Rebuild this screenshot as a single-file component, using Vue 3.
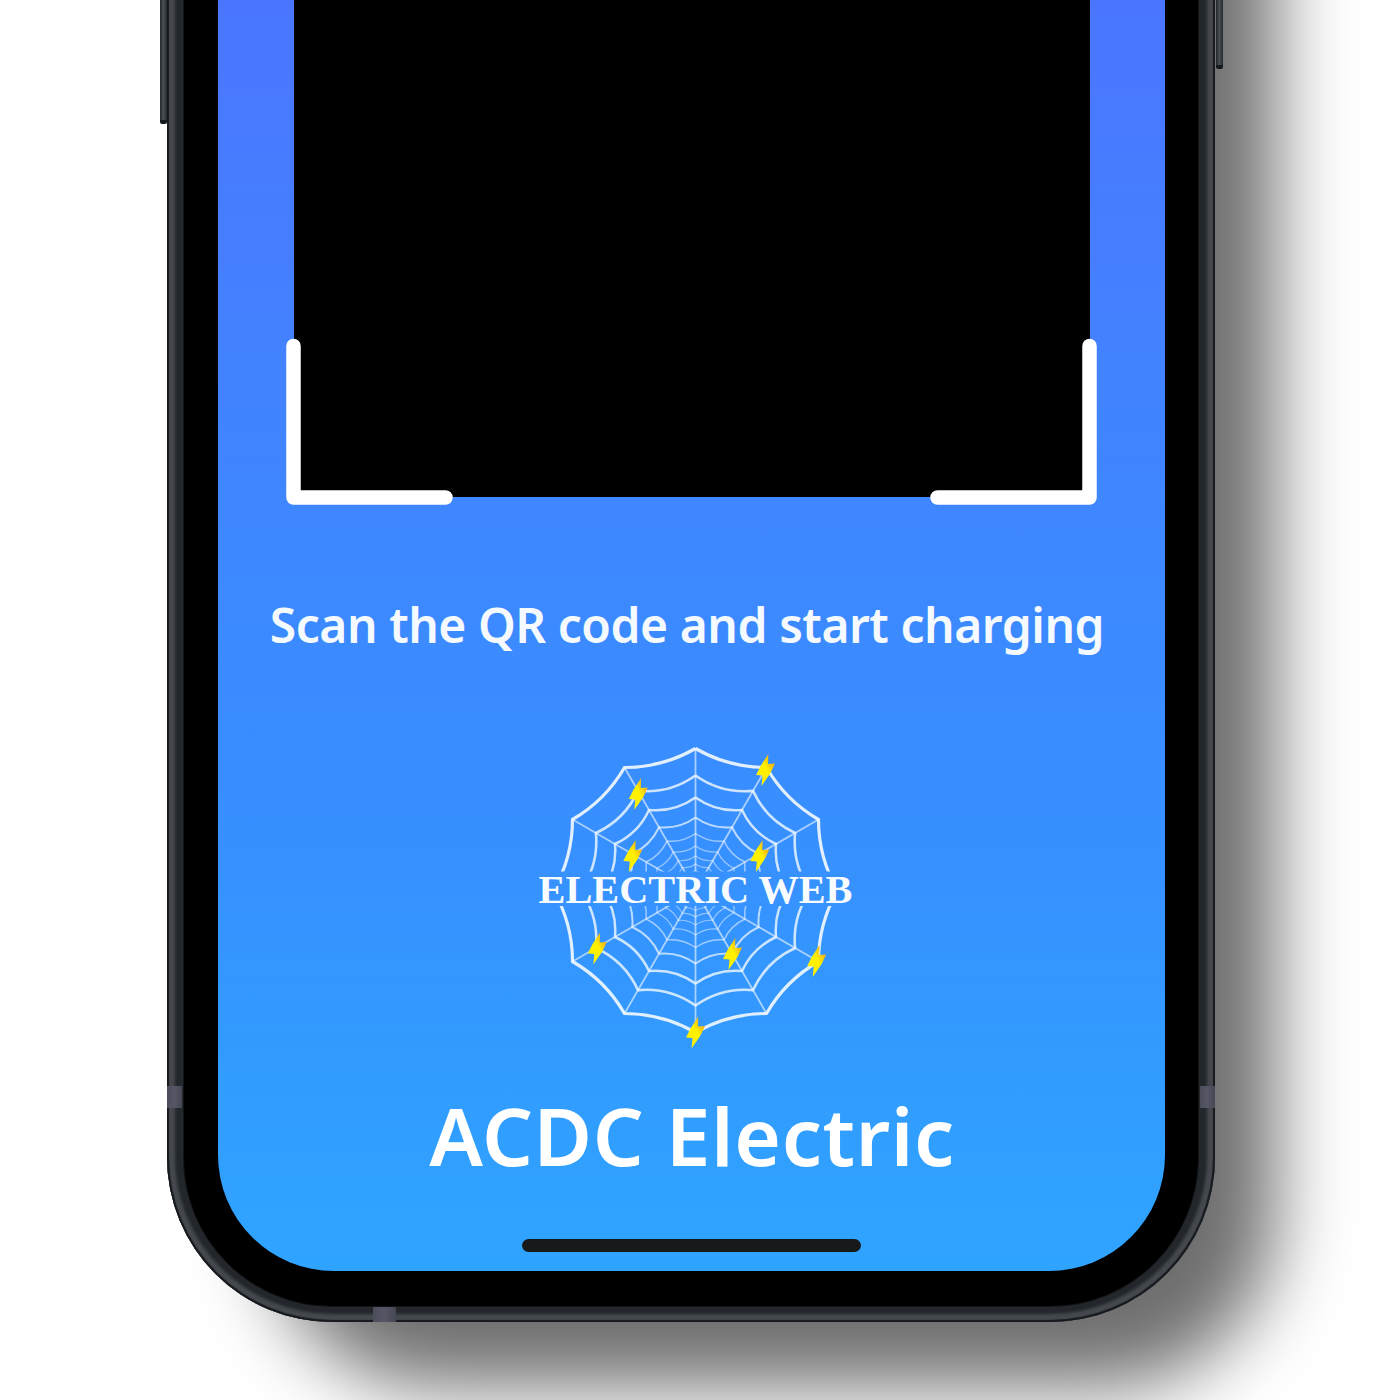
<script setup>
const CX = 165.5
const CY = 155.5
const radii = [142, 115, 93, 73, 57, 44.5, 34.5, 26.5, 20]

const point = (radius, degrees) => {
  const a = (degrees * Math.PI) / 180
  return `${(CX + radius * Math.sin(a)).toFixed(2)} ${(CY - radius * Math.cos(a)).toFixed(2)}`
}

const rings = radii.map((r, i) => {
  let d = `M${point(r, 0)}`
  for (let k = 0; k < 12; k++) {
    d += ` Q${point(r * (i === 0 ? 0.897 : 0.87), k * 30 + 15)} ${point(r, (k + 1) * 30)}`
  }
  return { d, width: [3.2, 2.6, 2.5, 2, 1.5, 1.3, 1.2, 1.1, 1][i], opacity: [0.9, 0.8, 0.8, 0.7, 0.55, 0.52, 0.5, 0.48, 0.48][i] }
})

const spokes = Array.from({ length: 12 }, (_, k) => `M${CX} ${CY}L${point(142, k * 30)}`).join('')

const bolts = [
  [235.5, 35], [108.3, 59], [102.8, 121], [229.8, 121],
  [67.3, 213.5], [202.5, 219], [286.7, 226], [165.5, 297.5],
]
</script>

<template>
  <main class="stage">
    <div class="phone">
      <span class="key key-left"></span>
      <span class="key key-right"></span>
      <span class="band band-left"></span>
      <span class="band band-right"></span>
      <span class="band band-bottom"></span>
      <div class="bezel">
        <div class="screen">
          <div class="scanner">
            <svg class="brackets" width="812" height="168" viewBox="0 0 812 168" fill="none" stroke="#fff" stroke-width="14.500" stroke-linecap="round" stroke-linejoin="round">
              <path d="M7.500 8V159.500H159.500" />
              <path d="M803.500 8V159.500H651.500" />
            </svg>
          </div>
          <p class="hint"><span>Scan the QR code and start charging</span></p>
          <svg class="logo" width="330" height="320" viewBox="0 0 330 320">
            <defs>
              <clipPath id="web-halves">
                <rect x="0" y="0" width="330" height="136.500" />
                <rect x="0" y="171" width="330" height="149" />
              </clipPath>
              <linearGradient id="spark" x1="0" y1="1" x2="1" y2="0">
                <stop offset="0.55" stop-color="#fff000" />
                <stop offset="0.8" stop-color="#efb516" />
              </linearGradient>
            </defs>
            <g clip-path="url(#web-halves)" fill="none" stroke="#f4faff">
              <path :d="spokes" stroke-width="1.800" opacity="0.6" />
              <path v-for="(ring, i) in rings" :key="i" :d="ring.d" :stroke-width="ring.width" :opacity="ring.opacity" />
            </g>
            <path
              v-for="([x, y], i) in bolts"
              :key="i"
              :transform="`translate(${x} ${y})`"
              d="M2.800 -16L2.500 -6L9.500 -6.500L5 3L-4 16L-3 5.500L-9.500 5L-5 -4Z"
              fill="url(#spark)"
            />
            <text x="165.500" y="168" text-anchor="middle" textLength="314" lengthAdjust="spacingAndGlyphs" class="wordmark">ELECTRIC WEB</text>
          </svg>
          <h1 class="name"><span>ACDC Electric</span></h1>
          <div class="home"></div>
        </div>
      </div>
    </div>
  </main>
</template>

<style>
body {
  margin: 0;
  background: #fff;
}
</style>

<style scoped>
.stage {
  isolation: isolate;
  width: 1400px;
  height: 1400px;
  overflow: hidden;
  background: #fff;
}
.phone {
  position: relative;
  box-sizing: border-box;
  width: 1048px;
  height: 1362px;
  margin: -40px 0 0 167px;
  padding: 40px 17px 16px;
  border-radius: 0 0 165px 165px;
  background: #23272c;
  box-shadow:
    inset 0 0 1px 2px #15191d,
    inset 0 0 3px 8px #45494e,
    inset 0 0 4px 12px #24282d;
}
.phone::before {
  content: "";
  position: absolute;
  z-index: -1;
  inset: -200px -60px -64px 100px;
  border-radius: 0 0 170px 170px;
  background: rgba(0, 0, 0, 0.57);
  filter: blur(38px);
}
.bezel {
  box-sizing: border-box;
  height: 1306px;
  padding: 0 33.5px 35px;
  border-radius: 0 0 148px 148px;
  background: #000;
  box-shadow: 0 0 0 1px #111417, 0 0 0 2px #26292c;
}
.screen {
  display: flex;
  flex-direction: column;
  align-items: center;
  height: 1271px;
  overflow: hidden;
  border-radius: 0 0 116px 116px;
  background: linear-gradient(#4a76ff 0, #4480ff 300px, #3e87ff 530px, #3790ff 850px, #319cff 1080px, #2fa4ff 1271px);
}
.scanner {
  position: relative;
  flex: none;
  width: 796px;
  height: 497px;
  margin-left: 1px;
  background: #000;
}
.brackets {
  position: absolute;
  left: -8px;
  bottom: -8.500px;
}
.hint {
  display: flex;
  justify-content: center;
  width: 100%;
  height: 80px;
  margin: 88px 0 0 -8px;
  color: #f5faff;
  font: 600 48px/80px "Noto Sans", sans-serif;
  letter-spacing: -0.46px;
  white-space: nowrap;
}
.logo {
  flex: none;
  margin-top: 70px;
  margin-left: 8px;
}
.wordmark {
  fill: #f8fcff;
  font: bold 39px "Liberation Serif", serif;
}
.name {
  height: 110px;
  margin: 25px 0 0 2px;
  color: #fff;
  font: 600 80px/110px "Noto Sans", sans-serif;
  letter-spacing: 0.6px;
  white-space: nowrap;
}
.home {
  flex: none;
  width: 339px;
  height: 13px;
  margin-top: 49px;
  margin-left: 1px;
  border-radius: 7px;
  background: #171a1b;
}
.key {
  position: absolute;
  top: 40px;
  width: 7px;
  background: linear-gradient(90deg, #24282c, #4a4f54 50%, #24282c);
  border-bottom: 4px solid #15191c;
  border-radius: 0 0 2px 2px;
}
.key-left {
  left: -7px;
  height: 120px;
}
.key-right {
  right: -8px;
  height: 65px;
}
.band {
  position: absolute;
  background: linear-gradient(90deg, #4b4d5b, #555766, #454754);
}
.band-left,
.band-right {
  top: 1126px;
  width: 15px;
  height: 22px;
}
.band-left {
  left: 0;
}
.band-right {
  right: 0;
}
.band-bottom {
  bottom: 0;
  left: 206px;
  width: 23px;
  height: 15px;
}
</style>
